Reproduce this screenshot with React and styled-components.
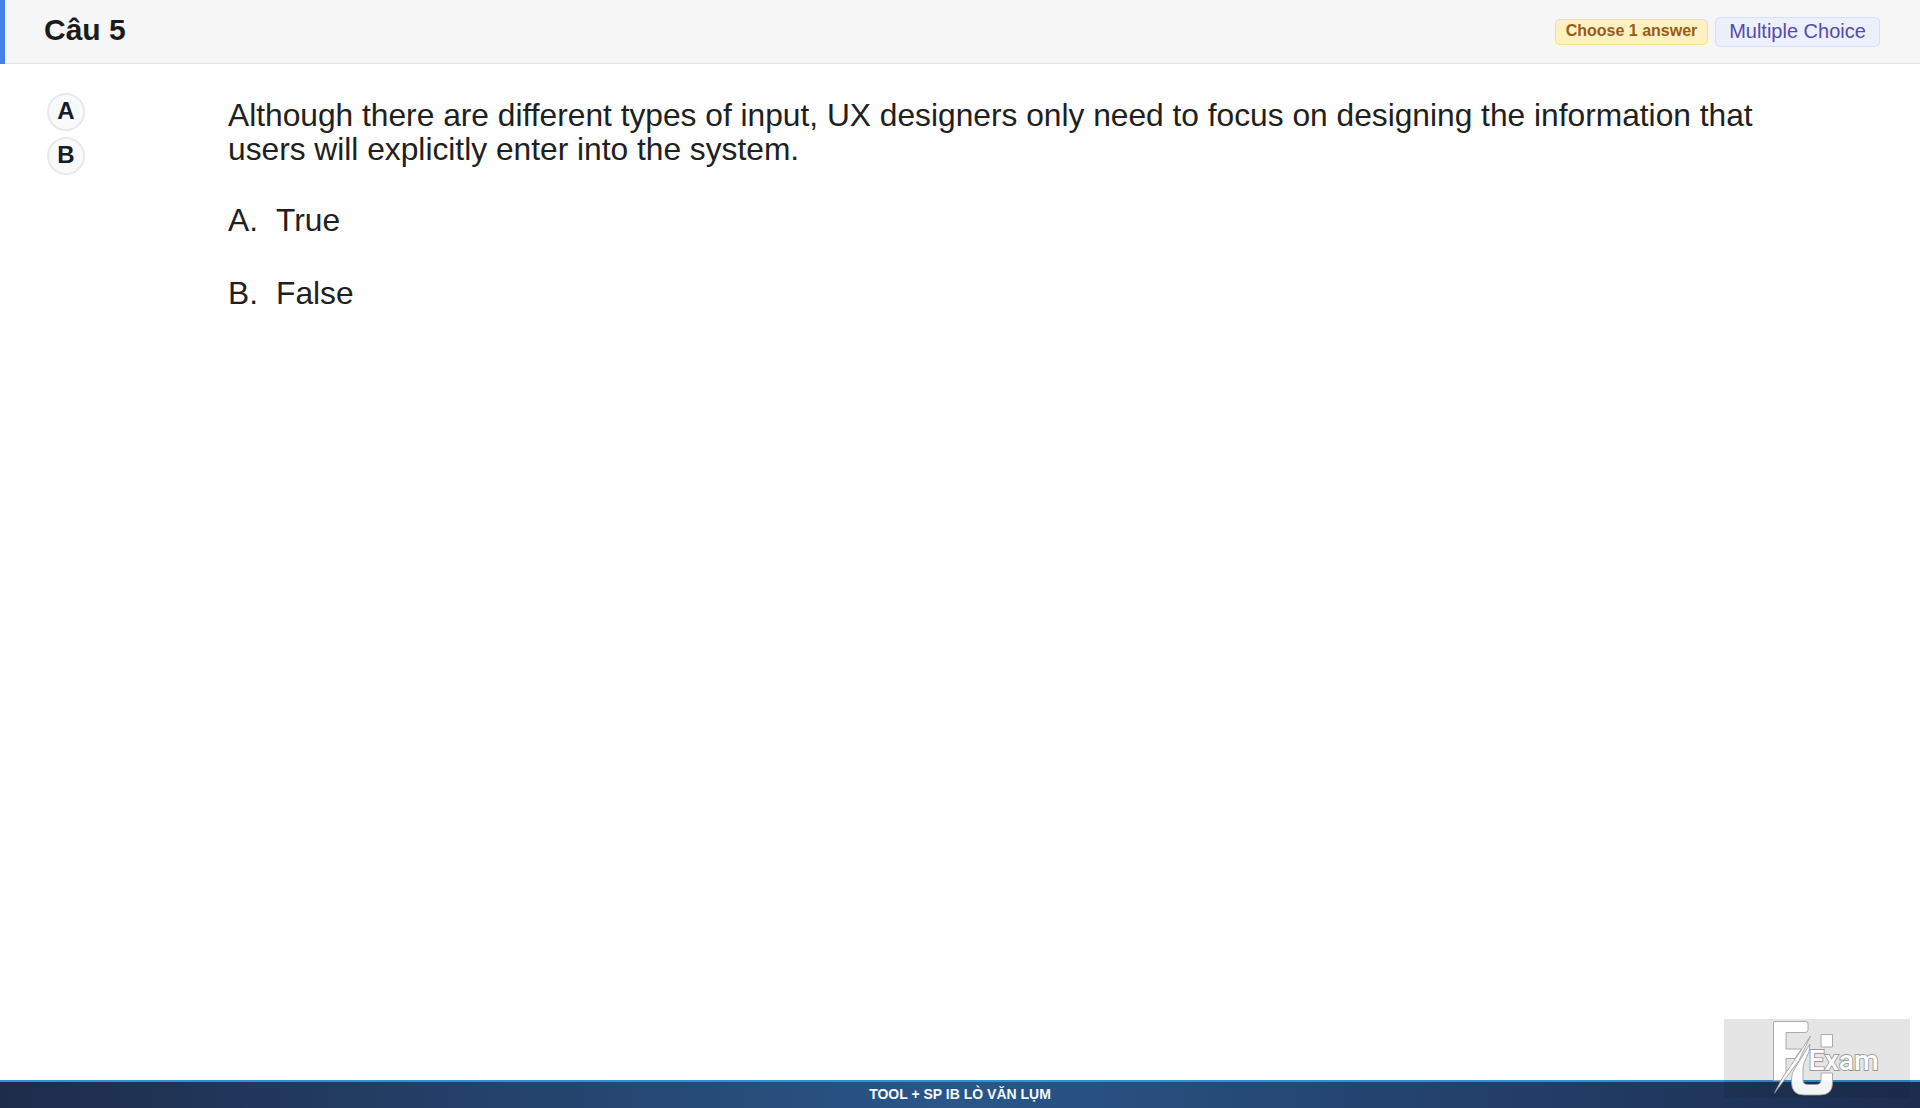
import React from "react";
import styled, { createGlobalStyle } from "styled-components";

const choices = ["A", "B"];

const App = () => {
  return (
    <>
      <GlobalStyle />
      <Page>
        <Header>
          <Title>Câu 5</Title>
          <Badges>
            <AnswerBadge>Choose 1 answer</AnswerBadge>
            <TypeBadge>Multiple Choice</TypeBadge>
          </Badges>
        </Header>

        <Content>
          <ChoiceList>
            {choices.map((choice) => (
              <ChoiceButton key={choice}>{choice}</ChoiceButton>
            ))}
          </ChoiceList>
          <Question>
            <QuestionLine>
              Although there are different types of input, UX designers only need to focus on designing the information that
            </QuestionLine>
            <QuestionLine>users will explicitly enter into the system.</QuestionLine>
            <Option $top={37}>
              <OptionLetter>A.</OptionLetter>
              True
            </Option>
            <Option $top={39}>
              <OptionLetter>B.</OptionLetter>
              False
            </Option>
          </Question>
        </Content>

        <Footer>TOOL + SP IB LÒ VĂN LỤM</Footer>

        <Watermark>
          <Logo />
        </Watermark>
      </Page>
    </>
  );
};

export default App;

const Logo = () => (
  <svg width="186" height="79" viewBox="0 0 186 79">
    <g fill="#fff" fillOpacity="0.95" stroke="#999" strokeWidth="0.8">
      <path d="M51 2.500H82Q84 2.500 84 5V11Q84 13.500 81 13.500H62V30H77.500L71 39.500H62V54L57 61.500H49.500V4Q49.500 2.500 51 2.500Z" />
      <path d="M86 25L71 49Q67.500 54 67.500 60V63Q67.500 76 80 76H96Q108.500 76 108.500 64V54H97V61Q97 65.500 92 65.500H84Q79 65.500 79 61V49Q79 45 85 33Z" />
      <path d="M86.500 17L75 41.500L50.500 74L58 59.500L72 39Z" />
      <path d="M97 15.500H108.500V28H97Z" />
    </g>
    <LogoText x="84.500" y="51" textLength="70" lengthAdjust="spacingAndGlyphs">
      Exam
    </LogoText>
  </svg>
);

const GlobalStyle = createGlobalStyle`
  body {
    margin: 0;
    background: #fff;
    font-family: "Liberation Sans", Arial, sans-serif;
  }
`;

const Page = styled.div`
  position: relative;
  display: flex;
  flex-direction: column;
  height: 1108px;
  overflow: hidden;
`;

const Header = styled.header`
  display: flex;
  justify-content: space-between;
  box-sizing: border-box;
  height: 64px;
  padding: 0 40px 0 44px;
  background: #f6f6f6;
  box-shadow: inset 5px 0 0 #4281ea, inset 0 -1px 0 #e2e3e5;
`;

const Title = styled.h1`
  margin: 0;
  font-size: 30px;
  line-height: 59px;
  font-weight: 700;
  color: #1b1b1b;
`;

const Badges = styled.div`
  display: flex;
  align-items: center;
  gap: 7px;
`;

const Badge = styled.span`
  box-sizing: border-box;
  display: flex;
  justify-content: center;
  border-radius: 5px;
`;

const AnswerBadge = styled(Badge)`
  width: 153px;
  height: 26px;
  font-size: 16px;
  line-height: 22px;
  font-weight: 700;
  color: #9a5a1c;
  background: #fef1c0;
  border: 1px solid #f3dc8c;
`;

const TypeBadge = styled(Badge)`
  width: 165px;
  height: 30px;
  font-size: 20px;
  line-height: 27px;
  color: #554bab;
  background: #ecf0fc;
  border: 1px solid #d8def6;
`;

const Content = styled.main`
  flex: 1;
  display: flex;
  padding-left: 47px;
`;

const ChoiceList = styled.div`
  display: flex;
  flex-direction: column;
  gap: 6px;
  width: 181px;
  padding-top: 29px;
`;

const ChoiceButton = styled.button`
  width: 38px;
  height: 38px;
  padding: 0 0 2px;
  font-family: inherit;
  font-size: 24px;
  line-height: 32px;
  font-weight: 700;
  color: #141b2a;
  background: #f9fafb;
  border: 2px solid #e8e9eb;
  border-radius: 50%;
`;

const Question = styled.div`
  padding-top: 34px;
  font-size: 31.72px;
  line-height: 34px;
  color: #202020;
`;

const QuestionLine = styled.div`
  white-space: nowrap;
`;

const Option = styled.div`
  display: flex;
  margin-top: ${(props) => props.$top}px;
`;

const OptionLetter = styled.span`
  width: 48px;
`;

const Footer = styled.footer`
  box-sizing: border-box;
  height: 28px;
  border-top: 2px solid #2b96cb;
  background: linear-gradient(90deg, #1e2c4b 0%, #2a5688 50%, #1d2d50 100%);
  font-size: 14px;
  line-height: 24px;
  font-weight: 700;
  text-align: center;
  color: #f4fbff;
`;

/* sits over the corner of the page and the footer */
const Watermark = styled.div`
  position: absolute;
  right: 10px;
  bottom: 10px;
  display: flex;
  width: 186px;
  height: 79px;
  background: rgba(20, 20, 20, 0.11);
`;

const LogoText = styled.text`
  font-family: Roboto, sans-serif;
  font-size: 28px;
  font-weight: 500;
  fill: #fff;
  stroke: #999;
  stroke-width: 1.8px;
  paint-order: stroke;
`;
